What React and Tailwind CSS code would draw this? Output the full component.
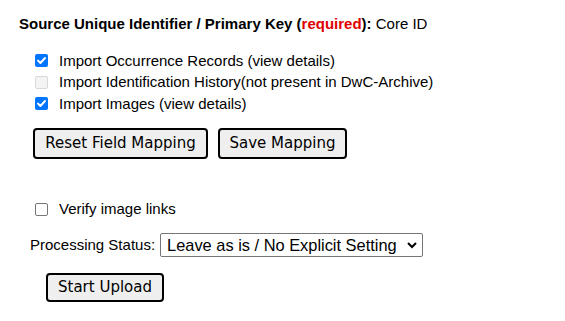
import React from "react";

function Box({ checked, disabled }) {
  if (checked) {
    return (
      <span className="flex h-[13px] w-[13px] items-center justify-center rounded-[2px] bg-[#0075ff]">
        <svg width="11" height="11" viewBox="0 0 11 11">
          <path d="M2 5.6 L4.4 8 L9 3" fill="none" stroke="#fff" strokeWidth="2" strokeLinecap="round" strokeLinejoin="round" />
        </svg>
      </span>
    );
  }
  return (
    <span
      className={
        disabled
          ? "block h-[13px] w-[13px] rounded-[2px] border border-[#d8d8d8] bg-[#f4f4f4]"
          : "block h-[13px] w-[13px] rounded-[2px] border border-[#767676] bg-white"
      }
    />
  );
}

function CheckRow({ checked, disabled, children }) {
  return (
    <div className="flex h-[21.5px] items-center">
      <span className="ml-[35px] mr-[11px] block">
        <Box checked={checked} disabled={disabled} />
      </span>
      <span>{children}</span>
    </div>
  );
}

function Btn({ children, className }) {
  return (
    <button
      className={
        "rounded-[4px] border-2 border-black bg-[#efefef] text-[15px] text-black " +
        className
      }
      style={{ fontFamily: '"DejaVu Sans", Verdana, sans-serif' }}
    >
      {children}
    </button>
  );
}

export default function App() {
  return (
    <div
      className="h-[321px] w-[565px] bg-white text-[15px] text-black"
      style={{ fontFamily: '"Liberation Sans", Arial, sans-serif' }}
    >
      <div className="pl-[19px] pt-[15px] font-bold leading-[18px]">
        Source Unique Identifier / Primary Key (<span className="text-[#e00000]">required</span>):{" "}
        <span className="font-normal">Core ID</span>
      </div>

      <div className="mt-[17px]">
        <CheckRow checked>Import Occurrence Records (view details)</CheckRow>
        <CheckRow disabled>Import Identification History(not present in DwC-Archive)</CheckRow>
        <CheckRow checked>Import Images (view details)</CheckRow>
      </div>

      <div className="mt-[13px] flex gap-[10px] pl-[33px]">
        <Btn className="h-[31px] w-[175px]">Reset Field Mapping</Btn>
        <Btn className="h-[31px] w-[129px]">Save Mapping</Btn>
      </div>

      <div className="mt-[40px]">
        <CheckRow>Verify image links</CheckRow>
      </div>

      <div className="mt-[13px] flex items-center pl-[30px]">
        <span className="mr-[5px]">Processing Status:</span>
        <div className="flex h-[24px] w-[263px] items-center justify-between whitespace-nowrap rounded-[2px] border border-[#767676] pl-[6px] pr-[4px] text-[16.4px]">
          <span>Leave as is / No Explicit Setting</span>
          <svg width="12" height="12" viewBox="0 0 12 12">
            <path d="M2 4 L6 8 L10 4" fill="none" stroke="#000" strokeWidth="2" />
          </svg>
        </div>
      </div>

      <div className="mt-[16px] pl-[46px]">
        <Btn className="h-[29px] w-[118px]">Start Upload</Btn>
      </div>
    </div>
  );
}
